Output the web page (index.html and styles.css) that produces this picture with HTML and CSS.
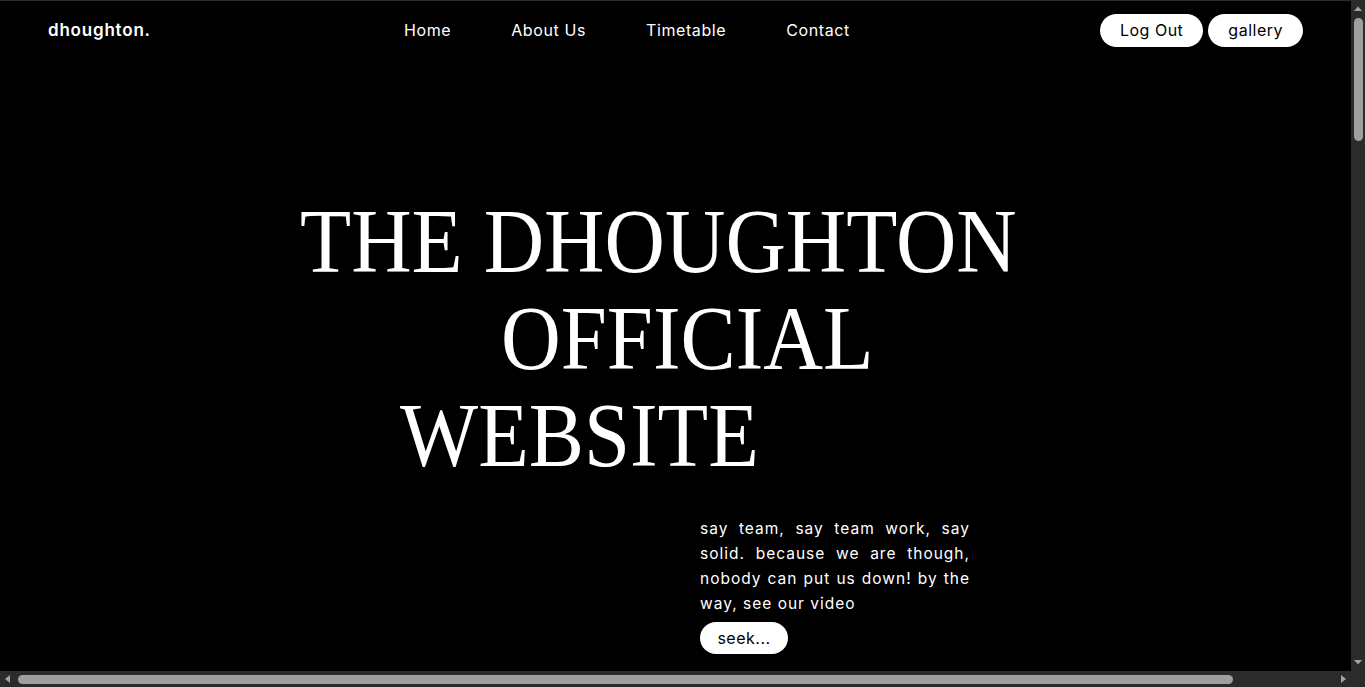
FILE: index.html
```html
<!DOCTYPE html>
<html lang="en">
<head>
<meta charset="utf-8">
<title>dhoughton.</title>
<link rel="stylesheet" href="styles.css">
</head>
<body>
<div class="page">
  <header class="nav">
    <a class="logo" href="#">dhoughton.</a>
    <nav class="links">
      <a href="#">Home</a>
      <a href="#">About Us</a>
      <a href="#">Timetable</a>
      <a href="#">Contact</a>
    </nav>
    <div class="actions">
      <a class="pill" href="#">Log Out</a>
      <a class="pill" href="#">gallery</a>
    </div>
  </header>
  <main class="hero">
    <h1 class="title">
      <span class="line l1">THE DHOUGHTON</span>
      <span class="line l2">OFFICIAL</span>
      <span class="line l3">WEBSITE</span>
    </h1>
    <div class="intro">
      <p>say team, say team work, say solid. because we are though, nobody can put us down! by the way, see our video</p>
      <a class="pill seek" href="#">seek...</a>
    </div>
  </main>
</div>
<div class="vscroll" aria-hidden="true">
  <svg class="arrow" width="14" height="14" viewBox="0 0 14 14"><path d="M3 9 L7 4.5 L11 9 Z" fill="#a3a3a3"/></svg>
  <div class="vthumb"></div>
  <svg class="arrow down" width="14" height="14" viewBox="0 0 14 14"><path d="M3 5 L7 9.5 L11 5 Z" fill="#a3a3a3"/></svg>
</div>
<div class="hscroll" aria-hidden="true">
  <svg class="arrow" width="16" height="16" viewBox="0 0 16 16"><path d="M10 4 L5 8 L10 12 Z" fill="#a3a3a3"/></svg>
  <div class="hthumb"></div>
  <svg class="arrow right" width="16" height="16" viewBox="0 0 16 16"><path d="M6 4 L11 8 L6 12 Z" fill="#a3a3a3"/></svg>
</div>
<div class="corner" aria-hidden="true"></div>
</body>
</html>
```
FILE: styles.css
```css
html, body { margin: 0; padding: 0; background: #000; }
body {
  color: #fff;
  font-family: "Inter", "Open Sans", sans-serif;
  height: 687px;
  overflow: hidden;
}
a { color: inherit; text-decoration: none; }
.page {
  width: 1351px;
  height: 671px;
  border-top: 1px solid #2b2b2b;
  box-sizing: border-box;
  overflow: hidden;
}
.nav {
  display: flex;
  align-items: center;
  height: 58px;
  padding: 0 48px;
}
.logo { font-size: 17px; font-weight: 600; letter-spacing: 0.8px; width: 200px; }
.links { display: flex; gap: 60px; font-size: 16px; letter-spacing: 0.6px; margin-left: 156px; }
.actions { display: flex; gap: 5px; margin-left: auto; }
.pill {
  display: inline-flex;
  align-items: center;
  justify-content: center;
  background: #fff;
  color: #000;
  border-radius: 17px;
  height: 33px;
  padding: 0 20px;
  font-size: 16px;
  letter-spacing: 0.5px;
}
.title {
  margin: 134px 0 0 0;
  font-family: "Liberation Serif", serif;
  font-weight: 400;
  font-size: 90px;
  line-height: 97px;
  display: flex;
  flex-direction: column;
  align-items: flex-start;
}
.line { display: block; transform-origin: left center; transform: scaleX(0.92); white-space: nowrap; }
.l1 { transform: scaleX(0.93); margin-left: 300px; }
.l2 { margin-left: 501px; }
.l3 { margin-left: 400px; }
.intro { margin: 32px 0 0 700px; width: 270px; }
.intro p { margin: 0; text-align: justify; font-size: 15.5px; line-height: 25px; letter-spacing: 1px; }
.seek { margin-top: 6px; width: 88px; padding: 0; height: 32px; }

.vscroll {
  position: fixed;
  top: 0; right: 0;
  width: 14px; height: 671px;
  background: #2b2b2b;
  display: flex;
  flex-direction: column;
  align-items: center;
}
.vscroll .arrow { flex: none; margin-top: 2px; }
.vthumb { width: 9px; height: 123px; margin-top: 2px; border-radius: 5px; background: #9f9f9f; }
.vscroll .down { margin-top: auto; margin-bottom: 2px; }
.hscroll {
  position: fixed;
  left: 0; bottom: 0;
  width: 1351px; height: 16px;
  background: #2b2b2b;
  display: flex;
  align-items: center;
}
.hscroll .arrow { flex: none; }
.hthumb { width: 1215px; height: 9px; margin-left: 2px; border-radius: 5px; background: #9f9f9f; }
.hscroll .right { margin-left: auto; margin-right: 0; }
.corner {
  position: fixed;
  right: 0; bottom: 0;
  width: 14px; height: 16px;
  background: #2b2b2b;
}
```
